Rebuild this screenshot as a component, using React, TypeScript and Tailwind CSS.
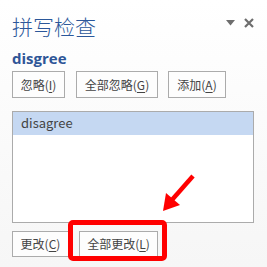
import React from "react";

const cjk = { fontFamily: '"Noto Sans CJK SC", "Noto Sans", sans-serif' };

function Btn({ label, k, className }: { label: string; k: string; className: string }) {
  return (
    <div
      className={`flex items-center justify-center border border-[#ababab] bg-[#fdfdfd] text-[12px] text-[#444] ${className}`}
      style={cjk}
    >
      <span>
        {label}(<span className="underline underline-offset-2">{k}</span>)
      </span>
    </div>
  );
}

export default function App() {
  return (
    <div className="relative w-[267px] h-[267px] overflow-hidden bg-gradient-to-b from-white to-[#f6f6f6]" style={cjk}>
      <div className="flex items-start pl-[12px] pr-[12px] pt-[13px]">
        <div className="text-[21px] leading-[26px] font-light text-[#2b579a] tracking-[0px]">拼写检查</div>
        <div className="ml-auto mt-[5px] flex items-center gap-[9px] pr-[1px]">
          <svg width="9" height="6" viewBox="0 0 9 6">
            <path d="M0 0 H9 L4.5 5.5 Z" fill="#6d6d6d" />
          </svg>
          <svg width="10" height="10" viewBox="0 0 10 10">
            <path d="M1 1 L9 9 M9 1 L1 9" stroke="#6d6d6d" strokeWidth="2.2" />
          </svg>
        </div>
      </div>
      <div
        className="pl-[12px] mt-[10px] text-[15px] leading-[18px] font-bold text-[#2e5597]"
        style={{ fontFamily: '"Open Sans", "Noto Sans", sans-serif' }}
      >
        disgree
      </div>
      <div className="flex pl-[12px] mt-[4px] gap-[11px]">
        <Btn label="忽略" k="I" className="w-[53px] h-[27px]" />
        <Btn label="全部忽略" k="G" className="w-[82px] h-[27px] mr-[-1px]" />
        <Btn label="添加" k="A" className="w-[58px] h-[27px]" />
      </div>
      <div className="ml-[12px] mt-[13px] w-[242px] h-[112px] border border-[#ababab] bg-white">
        <div className="h-[23px] bg-[#c5d8f2] pl-[8px] text-[13px] leading-[21px] text-[#444]">disagree</div>
      </div>
      <div className="flex pl-[12px] mt-[8px] gap-[10px]">
        <Btn label="更改" k="C" className="w-[57px] h-[26px]" />
        <Btn label="全部更改" k="L" className="w-[79px] h-[26px]" />
      </div>
      <div className="absolute left-[68px] top-[220px] w-[99px] h-[41px] border-[5px] border-[#ff0000] rounded-[5px]" />
      <svg className="absolute left-0 top-0" width="267" height="267" viewBox="0 0 267 267">
        <path d="M193 176 L171 201" stroke="#ff0000" strokeWidth="4.5" strokeLinecap="butt" />
        <path d="M163 211 L166 193 L180 205 Z" fill="#ff0000" />
      </svg>
    </div>
  );
}
